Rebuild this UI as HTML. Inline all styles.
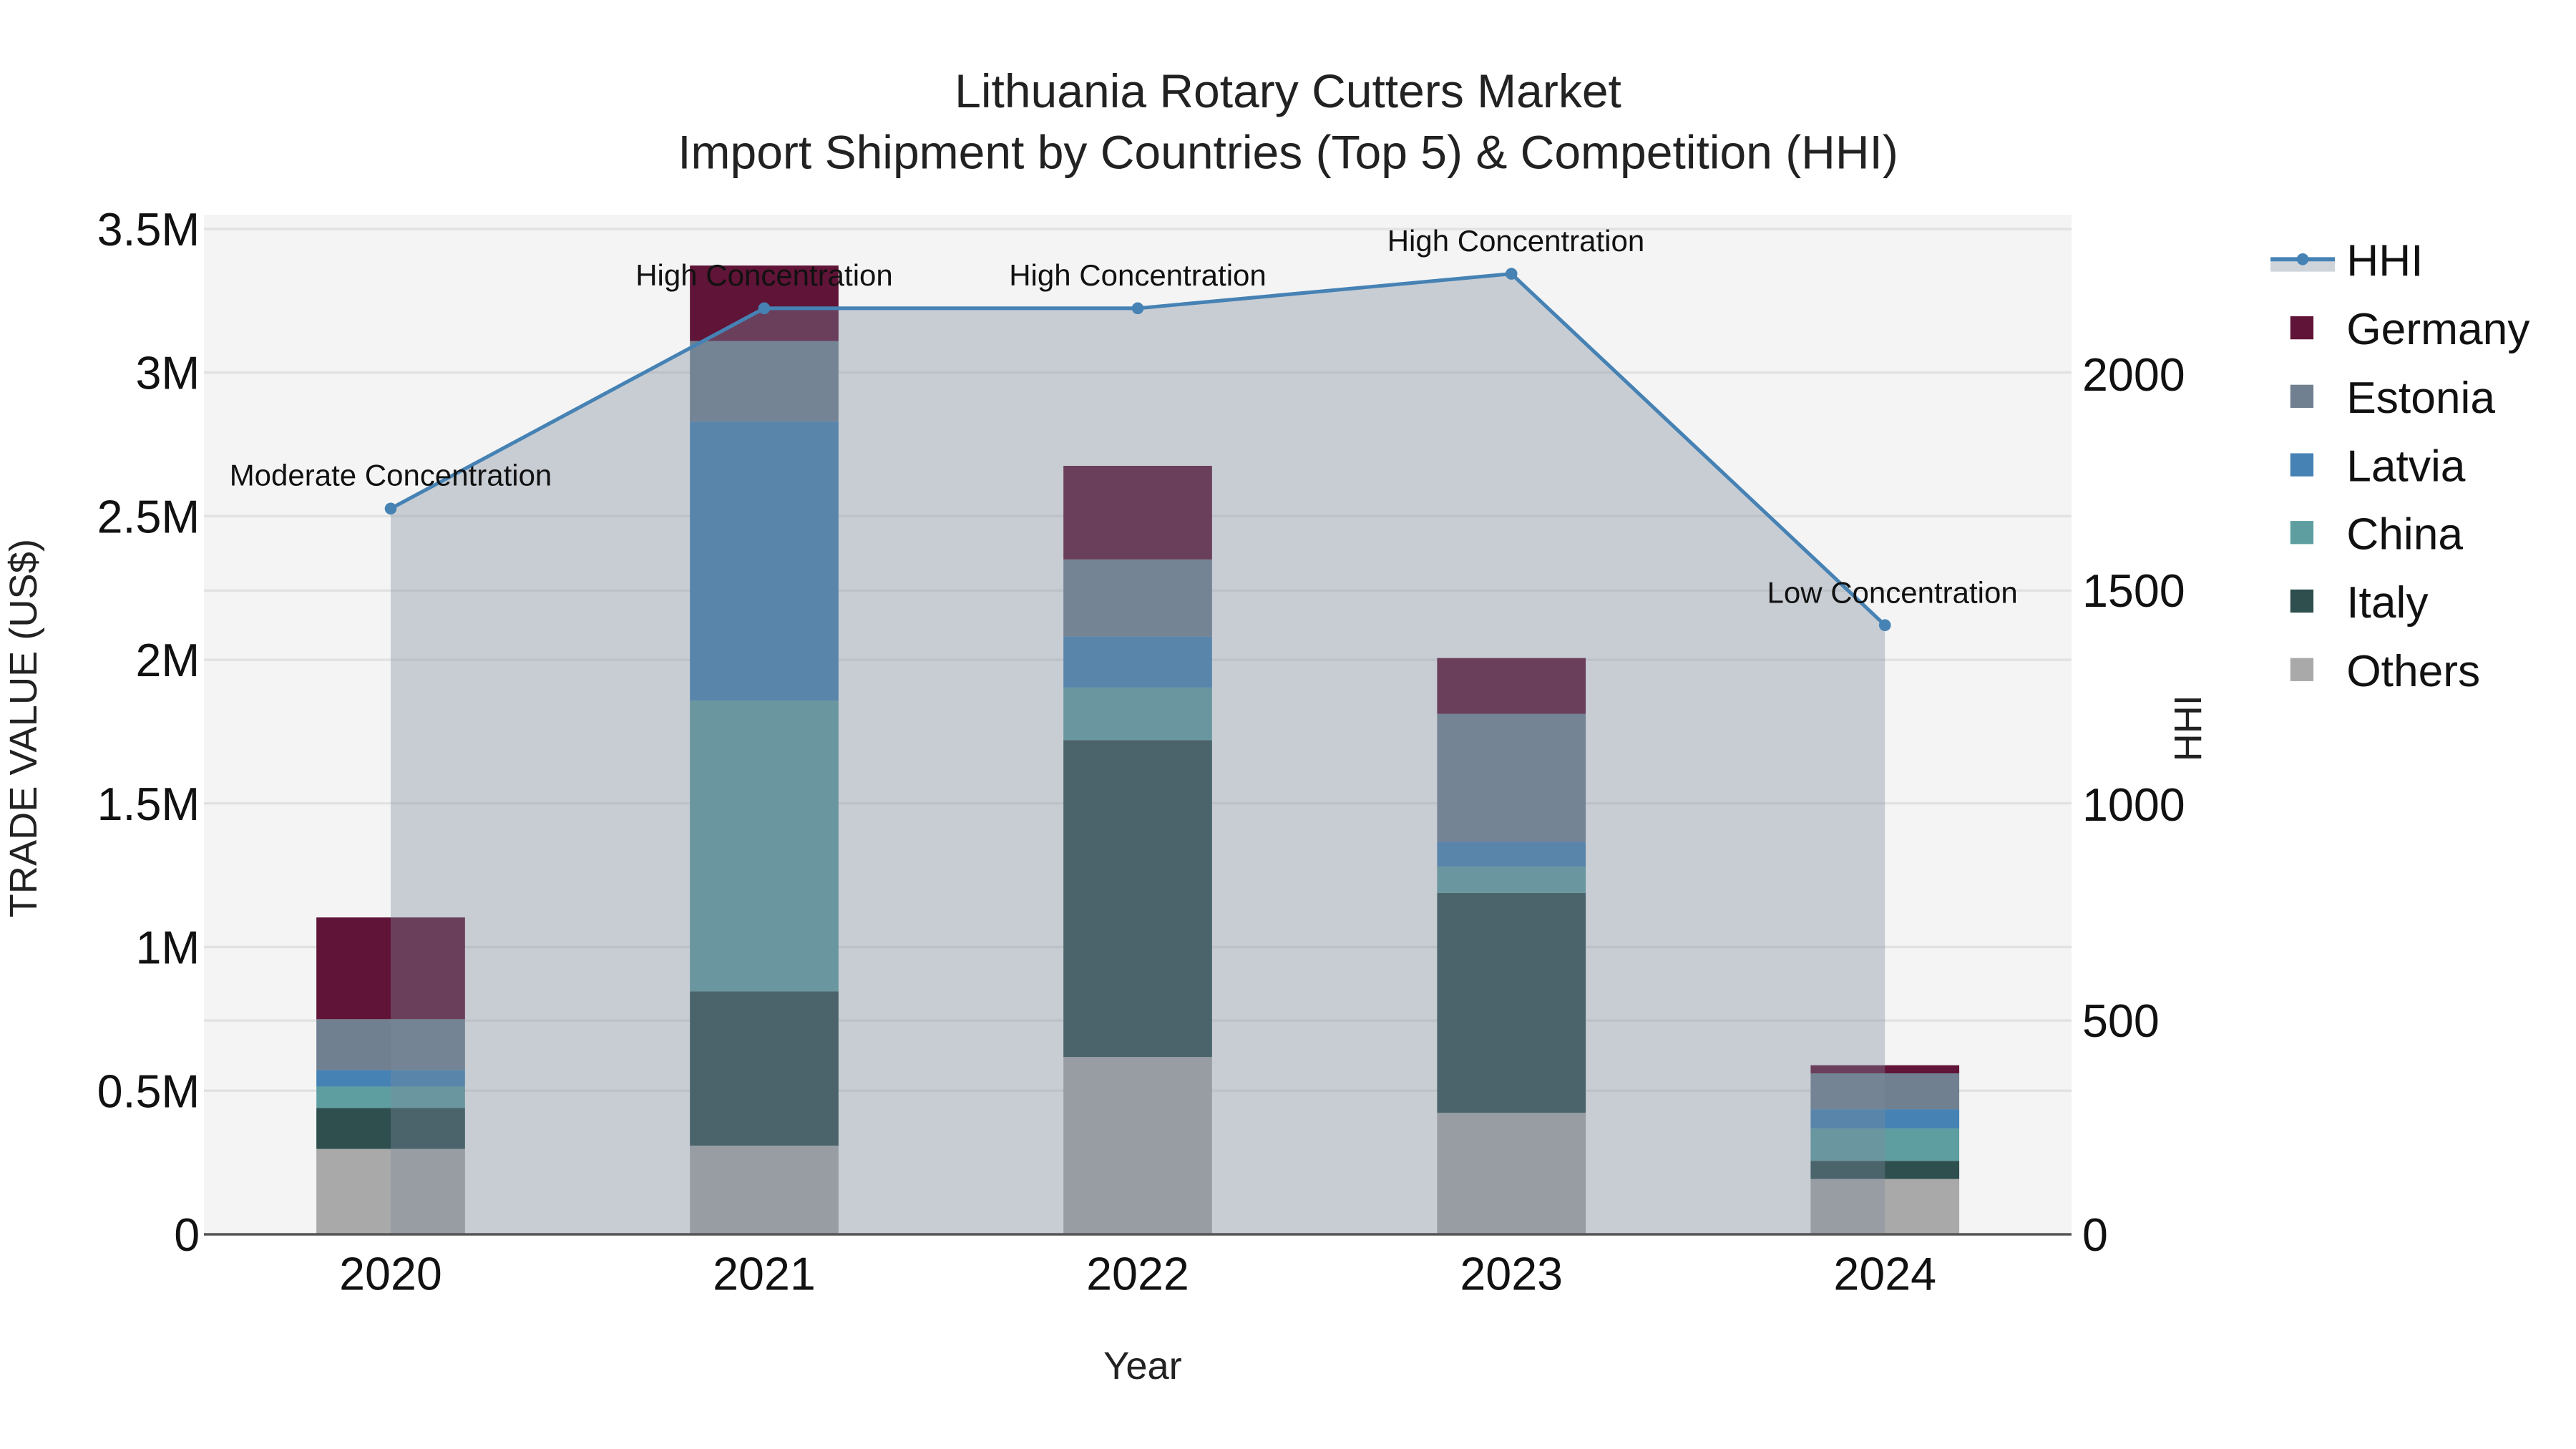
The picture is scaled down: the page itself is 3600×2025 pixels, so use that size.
<!DOCTYPE html>
<html><head><meta charset="utf-8"><style>
html,body{margin:0;padding:0;background:#fff;}
svg{display:block;font-family:"Liberation Sans",Arial,sans-serif;}
</style></head><body>
<svg width="3600" height="2025" viewBox="0 0 1560 877.5" xmlns="http://www.w3.org/2000/svg">
<rect x="0" y="0" width="1560" height="877.5" fill="#fff"/>
<rect x="123.5" y="130" width="1131" height="617.5" fill="#f4f4f4"/>
<g stroke="#e2e2e2" stroke-width="1.5">
<line x1="123.5" x2="1254.5" y1="660.5" y2="660.5"/>
<line x1="123.5" x2="1254.5" y1="573.5" y2="573.5"/>
<line x1="123.5" x2="1254.5" y1="486.5" y2="486.5"/>
<line x1="123.5" x2="1254.5" y1="399.6" y2="399.6"/>
<line x1="123.5" x2="1254.5" y1="312.6" y2="312.6"/>
<line x1="123.5" x2="1254.5" y1="225.6" y2="225.6"/>
<line x1="123.5" x2="1254.5" y1="138.7" y2="138.7"/>
<line x1="123.5" x2="1254.5" y1="618" y2="618"/>
<line x1="123.5" x2="1254.5" y1="357.6" y2="357.6"/>
</g>
<g>
<rect x="191.6" y="695.8" width="90" height="51.7" fill="#a9a9a9"/>
<rect x="191.6" y="671" width="90" height="24.8" fill="#2f4f4f"/>
<rect x="191.6" y="658" width="90" height="13" fill="#5f9ea0"/>
<rect x="191.6" y="648" width="90" height="10" fill="#4682b4"/>
<rect x="191.6" y="617.2" width="90" height="30.8" fill="#708090"/>
<rect x="191.6" y="555.6" width="90" height="61.6" fill="#601437"/>
<rect x="417.8" y="693.8" width="90" height="53.7" fill="#a9a9a9"/>
<rect x="417.8" y="600.3" width="90" height="93.5" fill="#2f4f4f"/>
<rect x="417.8" y="424.3" width="90" height="176" fill="#5f9ea0"/>
<rect x="417.8" y="255.3" width="90" height="169" fill="#4682b4"/>
<rect x="417.8" y="206.5" width="90" height="48.8" fill="#708090"/>
<rect x="417.8" y="160.8" width="90" height="45.7" fill="#601437"/>
<rect x="644" y="640.1" width="90" height="107.4" fill="#a9a9a9"/>
<rect x="644" y="448.2" width="90" height="191.9" fill="#2f4f4f"/>
<rect x="644" y="416.4" width="90" height="31.8" fill="#5f9ea0"/>
<rect x="644" y="385.5" width="90" height="30.9" fill="#4682b4"/>
<rect x="644" y="338.8" width="90" height="46.7" fill="#708090"/>
<rect x="644" y="282.1" width="90" height="56.7" fill="#601437"/>
<rect x="870.3" y="673.9" width="90" height="73.6" fill="#a9a9a9"/>
<rect x="870.3" y="540.7" width="90" height="133.2" fill="#2f4f4f"/>
<rect x="870.3" y="524.8" width="90" height="15.9" fill="#5f9ea0"/>
<rect x="870.3" y="509.8" width="90" height="15" fill="#4682b4"/>
<rect x="870.3" y="432.3" width="90" height="77.5" fill="#708090"/>
<rect x="870.3" y="398.5" width="90" height="33.8" fill="#601437"/>
<rect x="1096.5" y="714" width="90" height="33.5" fill="#a9a9a9"/>
<rect x="1096.5" y="703" width="90" height="11" fill="#2f4f4f"/>
<rect x="1096.5" y="683.4" width="90" height="19.6" fill="#5f9ea0"/>
<rect x="1096.5" y="671.7" width="90" height="11.7" fill="#4682b4"/>
<rect x="1096.5" y="650" width="90" height="21.7" fill="#708090"/>
<rect x="1096.5" y="645.1" width="90" height="4.9" fill="#601437"/>
</g>
<polygon points="236.6,747.5 236.6,308 462.8,186.7 689,186.7 915.3,165.8 1141.5,378.6 1141.5,747.5" fill="rgb(126,139,158)" fill-opacity="0.37"/>
<polyline points="236.6,308 462.8,186.7 689,186.7 915.3,165.8 1141.5,378.6" fill="none" stroke="#4682b4" stroke-width="2.2"/>
<g fill="#4682b4">
<circle cx="236.6" cy="308" r="3.6"/><circle cx="462.8" cy="186.7" r="3.6"/><circle cx="689" cy="186.7" r="3.6"/><circle cx="915.3" cy="165.8" r="3.6"/><circle cx="1141.5" cy="378.6" r="3.6"/>
</g>
<line x1="123.5" x2="1254.5" y1="747.5" y2="747.5" stroke="#555" stroke-width="1.5"/>
<g font-size="18.2" fill="#111" text-anchor="middle">
<text x="236.6" y="294">Moderate Concentration</text>
<text x="462.8" y="173">High Concentration</text>
<text x="689" y="173">High Concentration</text>
<text x="918" y="152">High Concentration</text>
<text x="1146" y="365">Low Concentration</text>
</g>
<g font-size="28.6" fill="#222" text-anchor="middle">
<text x="780" y="65">Lithuania Rotary Cutters Market</text>
<text x="780" y="102">Import Shipment by Countries (Top 5) &amp; Competition (HHI)</text>
</g>
<g font-size="28" fill="#111" text-anchor="end">
<text x="121" y="757.5">0</text>
<text x="121" y="670.5">0.5M</text>
<text x="121" y="583.5">1M</text>
<text x="121" y="496.5">1.5M</text>
<text x="121" y="409.6">2M</text>
<text x="121" y="322.6">2.5M</text>
<text x="121" y="235.6">3M</text>
<text x="121" y="148.7">3.5M</text>
</g>
<g font-size="28" fill="#111" text-anchor="start">
<text x="1261" y="757.5">0</text>
<text x="1261" y="628">500</text>
<text x="1261" y="497">1000</text>
<text x="1261" y="367.5">1500</text>
<text x="1261" y="236.5">2000</text>
</g>
<g font-size="28" fill="#111" text-anchor="middle">
<text x="236.6" y="781">2020</text>
<text x="462.8" y="781">2021</text>
<text x="689" y="781">2022</text>
<text x="915.3" y="781">2023</text>
<text x="1141.5" y="781">2024</text>
</g>
<text x="692" y="835" font-size="23.5" fill="#222" text-anchor="middle">Year</text>
<text transform="translate(22,441) rotate(-90)" font-size="23.5" fill="#222" text-anchor="middle">TRADE VALUE (US$)</text>
<text transform="translate(1333,441) rotate(-90)" font-size="23.5" fill="#222" text-anchor="middle">HHI</text>
<rect x="1375" y="157.5" width="39" height="7" fill="rgb(126,139,158)" fill-opacity="0.37"/>
<line x1="1375" x2="1414" y1="157" y2="157" stroke="#4682b4" stroke-width="2.5"/>
<circle cx="1394.5" cy="157" r="3.6" fill="#4682b4"/>
<g>
<rect x="1387" y="191.5" width="14" height="14" fill="#601437"/>
<rect x="1387" y="233" width="14" height="14" fill="#708090"/>
<rect x="1387" y="274.5" width="14" height="14" fill="#4682b4"/>
<rect x="1387" y="315.5" width="14" height="14" fill="#5f9ea0"/>
<rect x="1387" y="357" width="14" height="14" fill="#2f4f4f"/>
<rect x="1387" y="398.5" width="14" height="14" fill="#a9a9a9"/>
</g>
<g font-size="27" fill="#111">
<text x="1421" y="167">HHI</text>
<text x="1421" y="208.5">Germany</text>
<text x="1421" y="250">Estonia</text>
<text x="1421" y="291.5">Latvia</text>
<text x="1421" y="332.5">China</text>
<text x="1421" y="374">Italy</text>
<text x="1421" y="415.5">Others</text>
</g>
</svg>
</body></html>
